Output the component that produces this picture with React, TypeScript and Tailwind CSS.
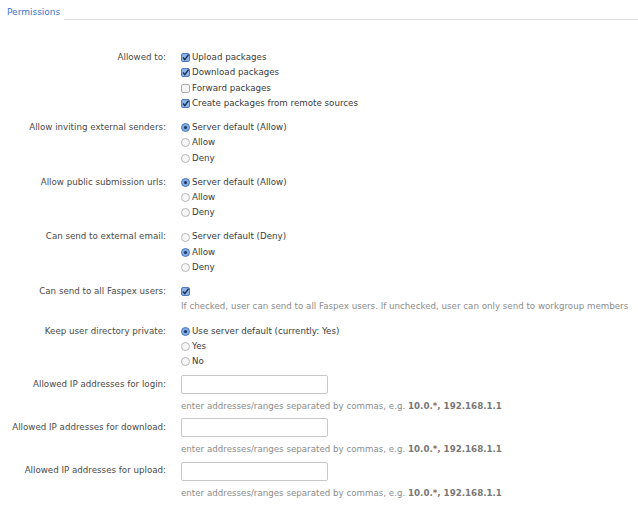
import type { ReactNode } from 'react';

// ─── Small controls ───────────────────────────────────────────────────────────

function Checkbox({ checked }: { checked?: boolean }) {
  return (
    <svg width="9" height="9" viewBox="0 0 9 9" className="shrink-0">
      <rect
        x="0.5"
        y="0.5"
        width="8"
        height="8"
        rx="1.5"
        fill={checked ? '#8db3e6' : '#f4f4f4'}
        stroke={checked ? '#4f7bbb' : '#adadad'}
      />
      {checked && (
        <path d="M2 4.6 L3.8 6.6 L7.6 1.6" fill="none" stroke="#1c3357" strokeWidth="1.5" />
      )}
    </svg>
  );
}

function Radio({ checked }: { checked?: boolean }) {
  return (
    <svg width="9" height="9" viewBox="0 0 9 9" className="shrink-0">
      <circle
        cx="4.5"
        cy="4.5"
        r="4"
        fill={checked ? '#7eaae3' : '#f6f6f6'}
        stroke={checked ? '#4f7bbb' : '#b8b8b8'}
      />
      {checked && <circle cx="4.5" cy="4.5" r="1.5" fill="#1c3357" />}
    </svg>
  );
}

function Option({ kind, checked, children }: { kind: 'check' | 'radio'; checked?: boolean; children: ReactNode }) {
  return (
    <div className="flex items-center gap-[2px] h-[15.33px]">
      {kind === 'check' ? <Checkbox checked={checked} /> : <Radio checked={checked} />}
      <span>{children}</span>
    </div>
  );
}

function Row({ label, children, className = '', center }: { label: string; children: ReactNode; className?: string; center?: boolean }) {
  return (
    <div className={`flex ${className}`}>
      <div className={`w-[166px] shrink-0 text-right text-[#4a4a4a] flex justify-end items-center ${center ? 'h-[19px]' : 'h-[15.33px]'}`}>
        {label}
      </div>
      <div className="ml-[15px] flex flex-col">{children}</div>
    </div>
  );
}

function Help({ children, className = '' }: { children: ReactNode; className?: string }) {
  return <div className={`text-[#8c8c8c] h-[15.33px] flex items-center whitespace-nowrap ${className}`}>{children}</div>;
}

function IpRow({ label, className = '' }: { label: string; className?: string }) {
  return (
    <Row label={label} center className={className}>
      <input
        type="text"
        className="w-[147px] h-[19px] border border-[#c8c8c8] rounded-[2px] bg-white outline-none"
      />
      <Help className="mt-[5px]">
        <span>
          enter addresses/ranges separated by commas, e.g. <b className="font-bold text-[#777]">10.0.*, 192.168.1.1</b>
        </span>
      </Help>
    </Row>
  );
}

// ─── Page ─────────────────────────────────────────────────────────────────────

export default function App() {
  return (
    <div className="w-[638px] h-[508px] bg-white overflow-hidden font-['DejaVu_Sans',Verdana,sans-serif] text-[8.7px] text-[#3a3a3a]">
      <div className="flex items-end pt-[6px]">
        <span className="ml-[7px] text-[9px] text-[#3b75c4] leading-[12px]">Permissions</span>
        <div className="flex-1 ml-[4px] border-b border-[#dcdcdc] mb-[-2px]" />
      </div>

      <div className="flex flex-col pt-[32px]">
        <Row label="Allowed to:">
          <Option kind="check" checked>Upload packages</Option>
          <Option kind="check" checked>Download packages</Option>
          <Option kind="check">Forward packages</Option>
          <Option kind="check" checked>Create packages from remote sources</Option>
        </Row>

        <Row label="Allow inviting external senders:" className="mt-[8.7px]">
          <Option kind="radio" checked>Server default (Allow)</Option>
          <Option kind="radio">Allow</Option>
          <Option kind="radio">Deny</Option>
        </Row>

        <Row label="Allow public submission urls:" className="mt-[8.7px]">
          <Option kind="radio" checked>Server default (Allow)</Option>
          <Option kind="radio">Allow</Option>
          <Option kind="radio">Deny</Option>
        </Row>

        <Row label="Can send to external email:" className="mt-[8.7px]">
          <Option kind="radio">Server default (Deny)</Option>
          <Option kind="radio" checked>Allow</Option>
          <Option kind="radio">Deny</Option>
        </Row>

        <Row label="Can send to all Faspex users:" className="mt-[8.7px]">
          <div className="flex items-center h-[15.33px]">
            <Checkbox checked />
          </div>
          <Help>If checked, user can send to all Faspex users. If unchecked, user can only send to workgroup members</Help>
        </Row>

        <Row label="Keep user directory private:" className="mt-[8.7px]">
          <Option kind="radio" checked>Use server default (currently: Yes)</Option>
          <Option kind="radio">Yes</Option>
          <Option kind="radio">No</Option>
        </Row>

        <IpRow label="Allowed IP addresses for login:" className="mt-[5.5px]" />
        <IpRow label="Allowed IP addresses for download:" className="mt-[4px]" />
        <IpRow label="Allowed IP addresses for upload:" className="mt-[4px]" />
      </div>
    </div>
  );
}
